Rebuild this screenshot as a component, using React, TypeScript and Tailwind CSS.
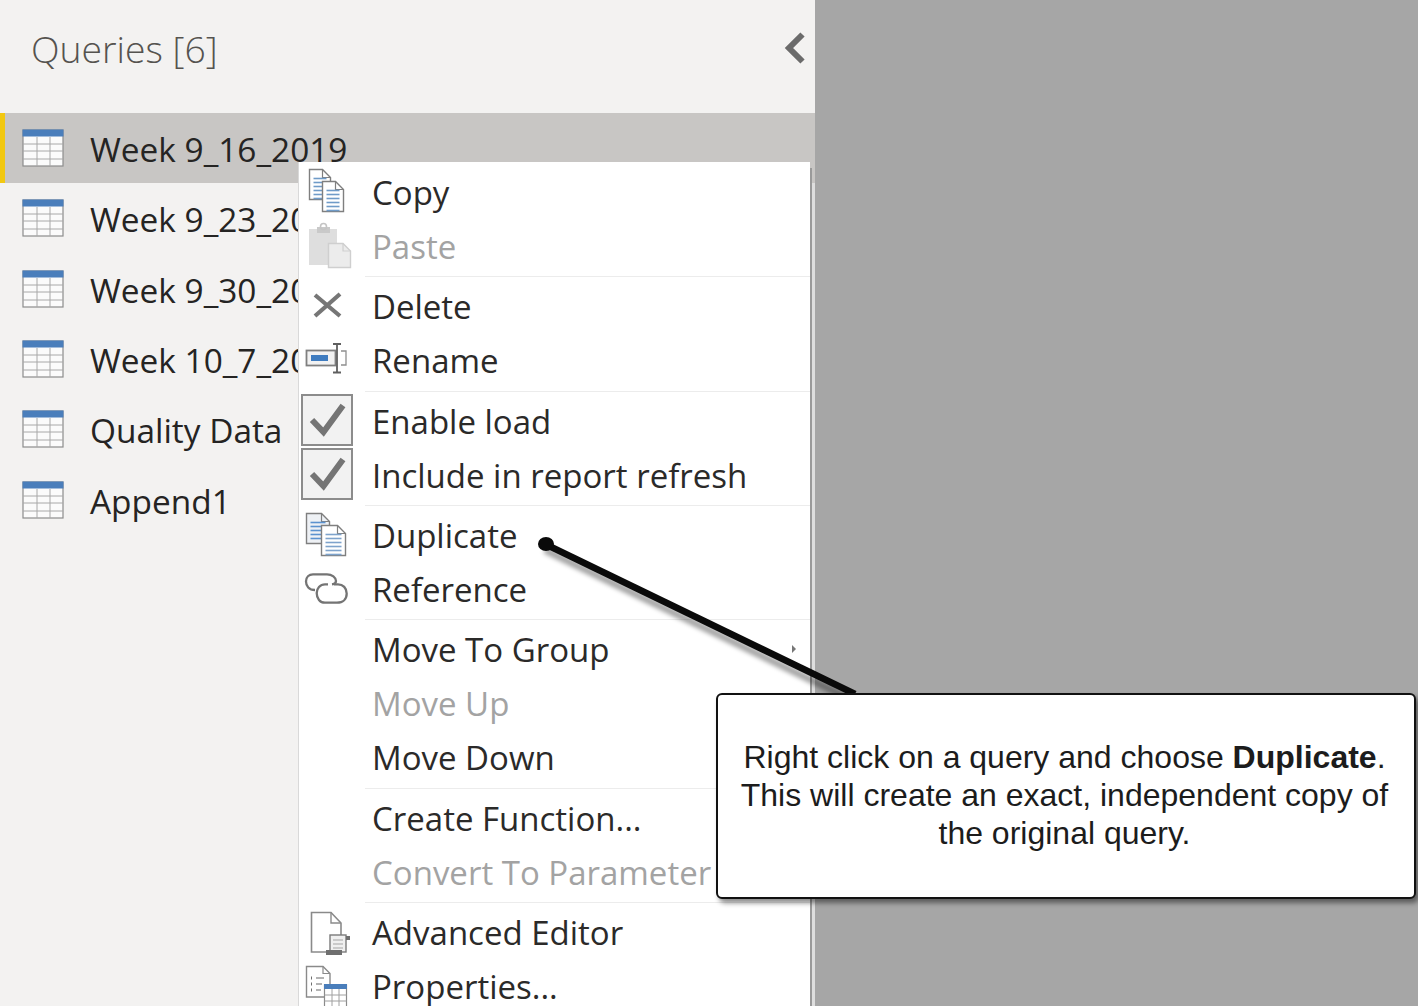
import React from "react";

const TableIcon = () => (
  <svg width="44" height="40" viewBox="0 0 44 40" className="shrink-0">
    <rect x="1" y="1" width="40" height="36" fill="#fbfbfb" stroke="#8c8c8c" strokeWidth="1.2" />
    <rect x="0.5" y="0.5" width="41" height="7" fill="#4a7ebb" />
    <path d="M15 8V37M28 8V37M1 15H41M1 22H41M1 30H41" stroke="#a8a8a8" strokeWidth="1" fill="none" />
  </svg>
);

const Page = ({ x, y, w, h, fill = "#fff", stroke = "#7f7f7f", lines = "#6f9bc8", n = 6 }: any) => (
  <g>
    <path
      d={`M${x} ${y}H${x + w - 8}L${x + w} ${y + 8}V${y + h}H${x}Z`}
      fill={fill}
      stroke={stroke}
      strokeWidth="1.4"
    />
    <path d={`M${x + w - 8} ${y}V${y + 8}H${x + w}`} fill="none" stroke={stroke} strokeWidth="1.2" />
    {Array.from({ length: n }).map((_, i) => (
      <path
        key={i}
        d={`M${x + 4} ${y + 9 + i * 4}H${x + w - 4}`}
        stroke={lines}
        strokeWidth="1.6"
      />
    ))}
  </g>
);

const icons: Record<string, React.ReactNode> = {
  copy: (
    <>
      <Page x={11.5} y={3.5} w={21} h={30} />
      <Page x={24.5} y={15.5} w={21} h={30} />
    </>
  ),
  paste: (
    <>
      <rect x="11" y="9" width="28" height="36" fill="#dedede" />
      <rect x="19" y="7" width="13" height="6" fill="#c9c9c9" />
      <circle cx="25.5" cy="6.5" r="3" fill="none" stroke="#c4c4c4" strokeWidth="1.6" />
      <path d="M30.5 23.5H45L52.5 31V47.5H30.5Z" fill="#ececec" stroke="#cfcfcf" strokeWidth="1.4" />
      <path d="M45 23.5V31H52.5" fill="none" stroke="#cfcfcf" strokeWidth="1.2" />
    </>
  ),
  del: (
    <path d="M17 15L42 36M42 14L17 36" stroke="#767676" strokeWidth="4.2" fill="none" />
  ),
  rename: (
    <>
      <rect x="8.5" y="16.5" width="29" height="15" fill="#f2f2f2" stroke="#7f7f7f" strokeWidth="1.8" />
      <rect x="13" y="21" width="17" height="6" fill="#3f7cc0" />
      <path d="M39 11V38M35 10H43M35 38.5H43" stroke="#5f5f5f" strokeWidth="1.8" fill="none" />
      <path d="M43 17H48V31H43" stroke="#8f8f8f" strokeWidth="1.3" fill="none" />
    </>
  ),
  check: (
    <>
      <rect x="4" y="1" width="50" height="50" fill="#f2f2f2" stroke="#8c8c8c" strokeWidth="2" />
      <path d="M14 26L25.5 38L45 11.5" stroke="#757575" strokeWidth="6" fill="none" />
    </>
  ),
  dup: (
    <>
      <Page x={8.5} y={4.5} w={23} h={30} fill="#eef1f5" lines="#5b92cf" n={5} />
      <Page x={23.5} y={16.5} w={24} h={30} lines="#7ea3cc" />
    </>
  ),
  ref: (
    <g fill="none" stroke="#747474" strokeWidth="2.3">
      <path d="M17 27C11 27 8 23 8 18.5C8 14 11 11.3 15 11.3H29C34 11.3 38 14.5 38 18C38 20 36 21 34 21.3" />
      <path d="M36 21.3H40C45 21.3 48.7 25 48.7 30.5C48.7 36 45 39.7 39 39.7H27C22 39.7 18.7 35.5 18.7 30C18.7 25.5 22 21.3 27 21.3H30" />
    </g>
  ),
  adv: (
    <>
      <path d="M13.5 6.5H33L43 17V46H13.5Z" fill="#fff" stroke="#8a8a8a" strokeWidth="1.6" />
      <path d="M33 6.5V17H43" fill="none" stroke="#8a8a8a" strokeWidth="1.4" />
      <rect x="32" y="29" width="16" height="17" fill="#f0f0f0" stroke="#7b7b7b" strokeWidth="1.4" />
      <path d="M35 34H45M35 38H45M35 42H45" stroke="#a5a5a5" strokeWidth="1" />
      <rect x="28" y="44" width="16" height="5" fill="#6f6f6f" />
      <rect x="48" y="30" width="4" height="4" fill="#6f6f6f" />
    </>
  ),
  props: (
    <>
      <path d="M8.5 6.5H25L32 13.5V37H8.5Z" fill="#fff" stroke="#8a8a8a" strokeWidth="1.4" />
      <path d="M25 6.5V13.5H32" fill="none" stroke="#8a8a8a" strokeWidth="1.2" />
      <path d="M13 18H14M13 24H14M13 30H14" stroke="#6f6f6f" strokeWidth="3" />
      <path d="M18 18H26M18 24H24M18 30H23" stroke="#9a9a9a" strokeWidth="1.4" />
      <rect x="26.5" y="25" width="22" height="22" fill="#fff" stroke="#8a8a8a" strokeWidth="1.2" />
      <rect x="26" y="24" width="23" height="5" fill="#4a7ebb" />
      <path d="M34 29V47M41 29V47M26.5 35H48.5M26.5 41H48.5" stroke="#a0a0a0" strokeWidth="1" />
    </>
  ),
};

const Row = ({ label, icon, disabled, arrow }: { label: string; icon?: string; disabled?: boolean; arrow?: boolean }) => (
  <div className="relative flex h-[54px] items-center pl-[73px]">
    {icon && (
      <svg width="60" height="54" viewBox="0 0 60 54" className="absolute left-[-1px] top-0 overflow-visible">
        {icons[icon]}
      </svg>
    )}
    <span className={disabled ? "text-[#a3a3a3]" : "text-[#2b2a29]"}>{label}</span>
    {arrow && <span className="absolute left-[493px] top-[22px] h-0 w-0 border-y-[4px] border-l-[4px] border-y-transparent border-l-[#777]" />}
  </div>
);

const Sep = () => <div className="my-[2.7px] ml-[66px] h-px bg-[#ececec]" />;

const queries = ["Week 9_16_2019", "Week 9_23_2019", "Week 9_30_2019", "Week 10_7_2019", "Quality Data", "Append1"];

export default function App() {
  return (
    <div className="relative flex h-[1006px] w-[1418px] overflow-hidden bg-[#a6a6a6] font-['Open_Sans',sans-serif]">
      <aside className="w-[815px] shrink-0 bg-[#f3f2f1]">
        <header className="flex h-[113px] items-start justify-between pl-[31px] pr-[9px]">
          <h1 className="mt-[24px] text-[37.3px] leading-[50px] font-light text-[#55534f]">Queries [6]</h1>
          <svg width="22" height="34" viewBox="0 0 22 34" className="mt-[31px]">
            <path d="M18.5 3.5L5 17L18.5 30.5" fill="none" stroke="#6b6b6b" strokeWidth="6" />
          </svg>
        </header>
        <ul>
          {queries.map((q, i) => (
            <li
              key={q}
              className={`flex h-[70.3px] items-center pt-[2px] text-[33.4px] text-[#252423] ${
                i === 0 ? "border-l-[5px] border-[#f2c811] bg-[#c8c6c4] pl-[17px]" : "pl-[22px]"
              }`}
            >
              <TableIcon />
              <span className="ml-[24px] whitespace-nowrap">{q}</span>
            </li>
          ))}
        </ul>
      </aside>

      <div className="absolute bottom-0 left-[298px] top-[162px] w-[512px] overflow-hidden border-l border-[#d9d9d9] bg-white pt-[3.5px] text-[33px]">
        <Row label="Copy" icon="copy" />
        <Row label="Paste" icon="paste" disabled />
        <Sep />
        <Row label="Delete" icon="del" />
        <Row label="Rename" icon="rename" />
        <Sep />
        <Row label="Enable load" icon="check" />
        <Row label="Include in report refresh" icon="check" />
        <Sep />
        <Row label="Duplicate" icon="dup" />
        <Row label="Reference" icon="ref" />
        <Sep />
        <Row label="Move To Group" arrow />
        <Row label="Move Up" disabled />
        <Row label="Move Down" />
        <Sep />
        <Row label="Create Function..." />
        <Row label="Convert To Parameter" disabled />
        <Sep />
        <Row label="Advanced Editor" icon="adv" />
        <Row label="Properties..." icon="props" />
      </div>
      <div className="absolute bottom-0 left-[810px] top-[168px] w-[2px] bg-[#9a9a9a]" />
      <div className="absolute bottom-0 left-[812px] top-[183px] w-[3px] bg-[#dedede]" />

      <svg width="1418" height="1006" className="pointer-events-none absolute left-0 top-0">
        <line x1="545" y1="550" x2="852" y2="700" stroke="#000" strokeOpacity="0.35" strokeWidth="7" className="blur-[2px]" />
        <line x1="545" y1="544" x2="855" y2="694" stroke="#0a0a0a" strokeWidth="6.8" />
        <ellipse cx="546" cy="544" rx="8" ry="7" fill="#0a0a0a" />
      </svg>

      <div className="absolute left-[716px] top-[693px] flex h-[206px] w-[700px] items-center justify-center rounded-[6px] border-2 border-[#111] bg-white pl-[20px] pr-[23px] pb-[2px] text-center font-['Liberation_Sans',sans-serif] text-[32px] leading-[38px] text-[#1c1c1c] shadow-[3px_4px_5px_rgba(0,0,0,0.45)]">
        <p>
          Right click on a query and choose <b>Duplicate</b>.<br />
          This will create an exact, independent copy of
          <br />
          the original query.
        </p>
      </div>
    </div>
  );
}
